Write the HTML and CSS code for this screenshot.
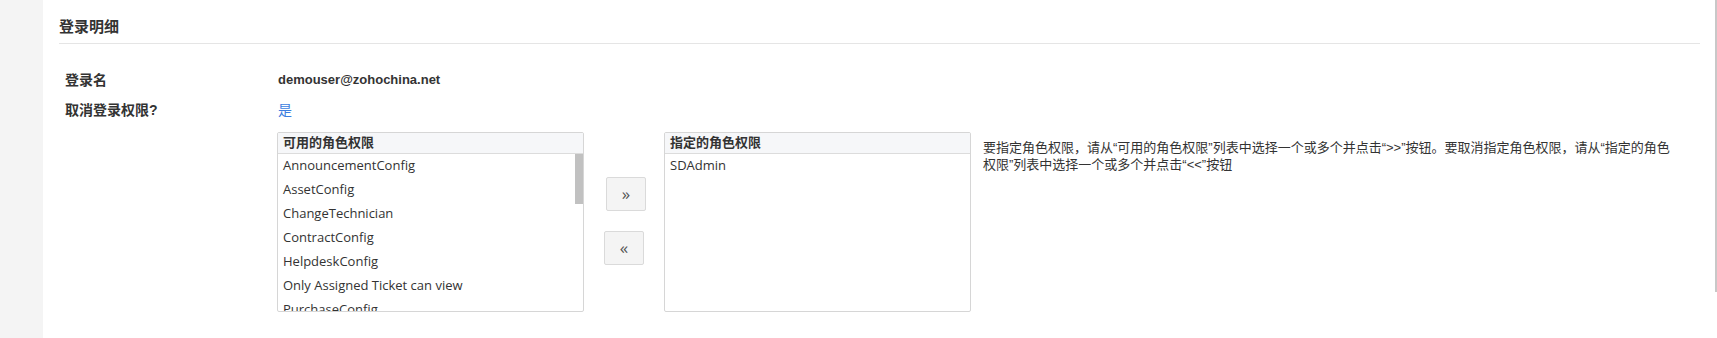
FILE: index.html
```html
<!DOCTYPE html>
<html lang="zh-CN">
<head>
    <meta charset="UTF-8">
    <meta name="viewport" content="width=device-width, initial-scale=1.0">
    <title>登录明细</title>
    <link rel="stylesheet" href="styles.css">
</head>
<body>
    <div class="page">
        <aside class="sidebar"></aside>

        <main class="content">
            <h2 class="section-title">登录明细</h2>

            <div class="details">
                <div class="detail-row">
                    <div class="detail-label">登录名</div>
                    <div class="detail-value">demouser@zohochina.net</div>
                </div>
                <div class="detail-row">
                    <div class="detail-label">取消登录权限?</div>
                    <div class="detail-value"><a class="link" href="#">是</a></div>
                </div>

                <!-- Role picker -->
                <div class="detail-row roles-row">
                    <div class="detail-label"></div>
                    <div class="role-picker">
                        <div class="role-list">
                            <div class="role-list-head">可用的角色权限</div>
                            <ul class="role-items">
                                <li>AnnouncementConfig</li>
                                <li>AssetConfig</li>
                                <li>ChangeTechnician</li>
                                <li>ContractConfig</li>
                                <li>HelpdeskConfig</li>
                                <li>Only Assigned Ticket can view</li>
                                <li>PurchaseConfig</li>
                            </ul>
                            <div class="scroll-thumb"></div>
                        </div>

                        <div class="role-actions">
                            <button class="move-btn add" type="button">&raquo;</button>
                            <button class="move-btn remove" type="button">&laquo;</button>
                        </div>

                        <div class="role-list">
                            <div class="role-list-head">指定的角色权限</div>
                            <ul class="role-items">
                                <li>SDAdmin</li>
                            </ul>
                        </div>

                        <p class="role-help">要指定角色权限，请从“可用的角色权限”列表中选择一个或多个并点击“&gt;&gt;”按钮。要取消指定角色权限，请从“指定的角色权限”列表中选择一个或多个并点击“&lt;&lt;”按钮</p>
                    </div>
                </div>
            </div>
        </main>

        <div class="page-scroll"></div>
    </div>
</body>
</html>
```

FILE: styles.css
```css
body {
    margin: 0;
    font-family: "Liberation Sans", "Noto Sans CJK SC", sans-serif;
    color: #333;
    background: #fff;
}
.page {
    display: flex;
    min-height: 100vh;
    position: relative;
}
.sidebar {
    width: 43px;
    flex: none;
    background: #f4f4f4;
}
.content {
    flex: 1;
    padding: 0 17px 0 16px;
}
.section-title {
    margin: 0;
    padding: 17px 0 6px;
    font-size: 15px;
    line-height: 20px;
    font-weight: bold;
    border-bottom: 1px solid #e5e5e5;
}
.details {
    padding: 21px 0 0 6px;
}
.detail-row {
    display: flex;
    line-height: 30px;
}
.detail-label {
    width: 212px;
    flex: none;
    font-size: 14px;
    font-weight: bold;
}
.detail-value {
    padding-left: 1px;
    font-size: 13px;
    font-weight: bold;
}
.link {
    color: #3d7ee0;
    text-decoration: none;
    font-size: 14px;
    font-weight: normal;
}
.roles-row {
    margin-top: 6px;
    line-height: normal;
}
.role-picker {
    display: flex;
    align-items: flex-start;
}
.role-list {
    position: relative;
    width: 305px;
    height: 178px;
    flex: none;
    display: flex;
    flex-direction: column;
    border: 1px solid #d6d6d6;
    border-radius: 2px;
    overflow: hidden;
}
.role-list-head {
    flex: none;
    height: 20px;
    line-height: 20px;
    padding-left: 5px;
    background: #f6f7f9;
    border-bottom: 1px solid #dcdcdc;
    font-size: 13px;
    font-weight: bold;
}
.role-items {
    flex: 1;
    list-style: none;
    margin: 0;
    padding: 0;
    overflow: hidden;
    font-family: "Open Sans", sans-serif;
    font-size: 13px;
    color: #333;
}
.role-items li {
    line-height: 22px;
    padding: 0 0 2px 5px;
    white-space: nowrap;
}
.scroll-thumb {
    position: absolute;
    top: 21px;
    right: 0;
    width: 8px;
    height: 50px;
    background: #c1c1c1;
}
.role-actions {
    width: 80px;
    flex: none;
    display: flex;
    flex-direction: column;
    align-items: center;
    gap: 20px;
    padding-top: 45px;
}
.move-btn {
    width: 40px;
    height: 34px;
    padding: 0 0 2px;
    border: 1px solid #dadada;
    border-radius: 2px;
    background: #f4f4f4;
    color: #555;
    font-family: "Open Sans", sans-serif;
    font-size: 17px;
    line-height: 1;
    cursor: pointer;
}
.move-btn.add {
    margin-left: 4px;
}
.role-help {
    width: 690px;
    margin: 7px 0 0 12px;
    font-size: 13px;
    line-height: 17px;
    color: #333;
}
.page-scroll {
    position: absolute;
    top: 0;
    right: 0;
    width: 2px;
    height: 292px;
    background: #c8c8c8;
}
```
